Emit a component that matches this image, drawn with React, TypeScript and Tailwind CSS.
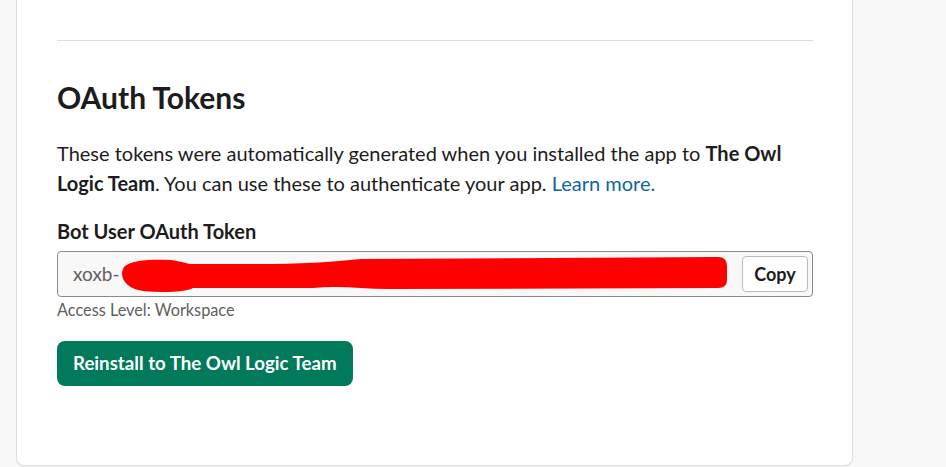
import React from "react";

function Scribble() {
  return (
    <svg
      className="pointer-events-none absolute left-0 top-0"
      width="756"
      height="46"
      viewBox="0 0 756 46"
      fill="none"
    >
      <path
        d="M66 15 C 72 8, 95 7, 113 8 C 122 9, 126 11, 132 12 L 200 12 C 240 12, 275 10, 303 7 L 660 5 Q 669 5, 669 14 L 669 28 Q 669 36, 660 36 L 330 37 C 305 37, 280 33, 255 36 L 135 36 C 128 40, 105 41, 85 39 C 68 37, 60 25, 66 15 Z"
        fill="#ff0000"
      />
    </svg>
  );
}

export default function App() {
  return (
    <div
      className="min-h-[467px] w-[946px] bg-[#f8f8f8] pl-4"
      style={{ fontFamily: "Lato, 'Liberation Sans', sans-serif" }}
    >
      <div className="h-[466px] w-[837px] rounded-b-lg border border-t-0 border-[#dddddd] bg-white pl-10 pr-[39px] pt-10 shadow-[0_1px_2px_rgba(0,0,0,0.04)]">
        <div className="h-px bg-[#dddddd]" />

        <h2 className="mt-[38px] text-[30px] font-bold leading-9 text-[#1d1c1d]">
          OAuth Tokens
        </h2>

        <p className="mt-[23px] text-[20px] leading-[30px] text-[#1d1c1d]">
          These tokens were automatically generated when you installed the app
          to <span className="font-bold">The Owl Logic Team</span>. You can use
          these to authenticate your app.{" "}
          <a className="text-[#1264a3]" href="#">
            Learn more.
          </a>
        </p>

        <div className="mt-[19px] text-[20px] font-bold leading-7 text-[#1d1c1d]">
          Bot User OAuth Token
        </div>

        <div className="relative mt-[6px] flex h-[46px] items-center rounded border border-[#8a8a8a] bg-[#f8f8f8] pl-[15px] pr-[4px]">
          <span className="flex-1 text-[19px] text-[#616061]">xoxb-</span>
          <Scribble />
          <button
            type="button"
            className="relative h-9 w-[66px] rounded border border-[#bbbbbb] bg-white text-lg font-bold text-[#1d1c1d]"
          >
            Copy
          </button>
        </div>

        <div className="mt-[3px] text-[16.3px] leading-5 text-[#616061]">
          Access Level: Workspace
        </div>

        <button
          type="button"
          className="mt-[21px] h-[45px] rounded-lg bg-[#007a5a] px-4 text-[18.7px] font-bold text-white"
        >
          Reinstall to The Owl Logic Team
        </button>
      </div>
    </div>
  );
}
